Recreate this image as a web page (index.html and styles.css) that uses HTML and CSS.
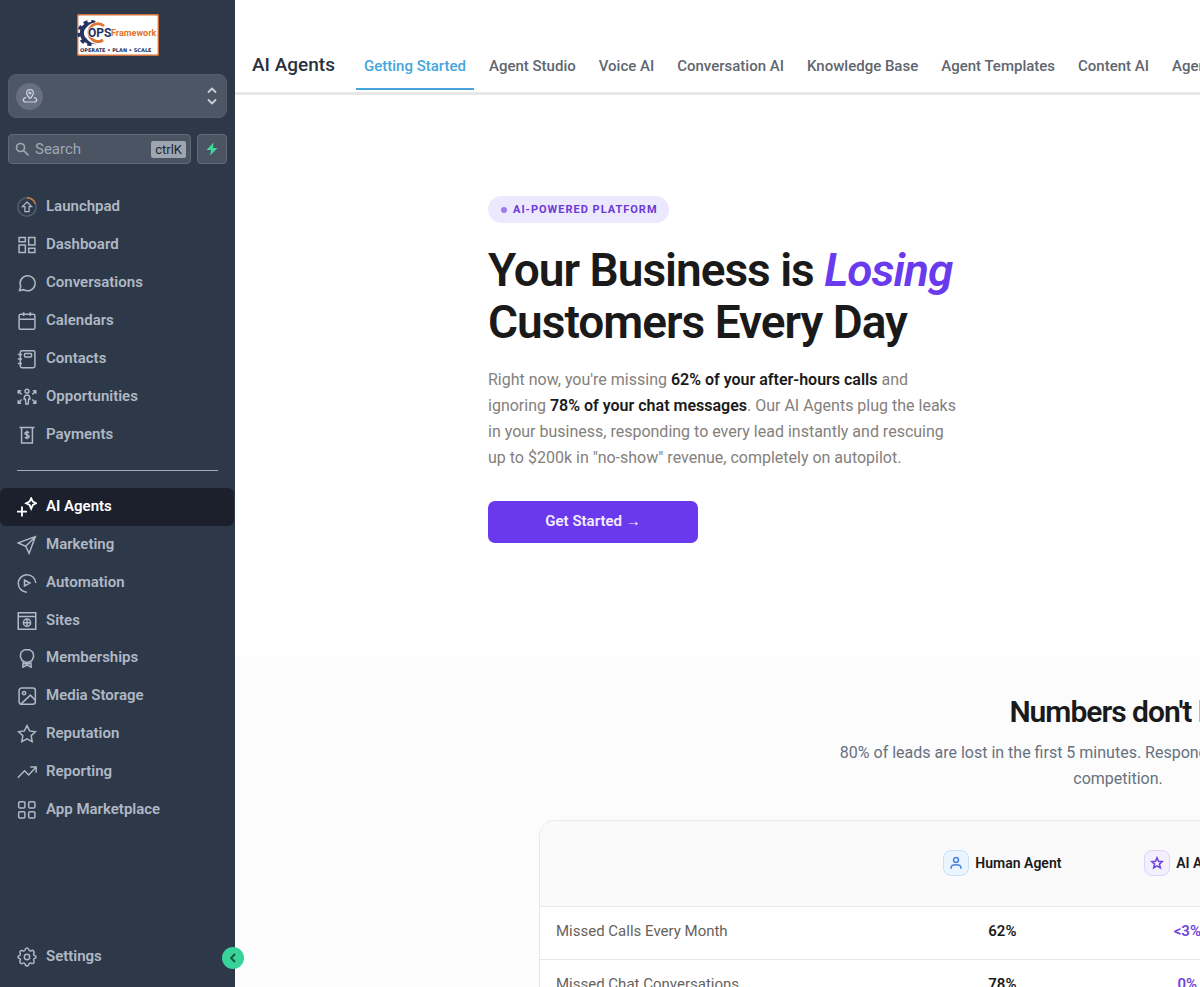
FILE: index.html
```html
<!DOCTYPE html>
<html lang="en">
<head>
<meta charset="utf-8">
<title>AI Agents</title>
<link rel="stylesheet" href="styles.css">
</head>
<body>
<div class="app">
  <aside class="sidebar">
    <svg class="logo" viewBox="0 0 82 42" role="img" aria-label="OPS Framework">
      <rect x="0.5" y="0.5" width="81" height="41" rx="2" fill="#fff" stroke="#d0713a"/>
      <path d="M18 11a9 9 0 1 0 0 16" fill="none" stroke="#26325f" stroke-width="4"/>
      <path d="M18 8.500a11.500 11.500 0 1 0 0 21" fill="none" stroke="#26325f" stroke-width="3" stroke-dasharray="4 3.500"/>
      <path d="M24 12.500a8.500 8.500 0 1 0 0 13" fill="#fff" stroke="#fff" stroke-width="4"/>
      <path d="M27 12a9 9 0 1 0-1 14" fill="none" stroke="#dd7430" stroke-width="2.800"/>
      <text x="11" y="23" class="logo-ops">OPS</text>
      <text x="34" y="22" class="logo-frame">Framework</text>
      <text x="3" y="38" class="logo-tag">OPERATE • PLAN • SCALE</text>
    </svg>
    <button class="account" aria-label="Switch account">
      <span class="account-pin"><svg class="i16" viewBox="0 0 24 24"><path d="M12 16c-4-4-5-6-5-8.500a5 5 0 0 1 10 0C17 10 16 12 12 16zM6 14c-6 2-5 7 0 7h12c5 0 6-5 0-7"/><circle cx="12" cy="7.500" r="1.500"/></svg></span>
      <svg class="chevrons" viewBox="0 0 10 18"><path d="M1 5.500l4-4 4 4M1 12.500l4 4 4-4"/></svg>
    </button>
    <div class="search-row">
      <label class="search">
        <svg class="i14" viewBox="0 0 14 14"><circle cx="5.500" cy="5.500" r="4"/><path d="M8.500 8.500l5 5"/></svg>
        <input type="text" placeholder="Search" aria-label="Search">
        <kbd>ctrlK</kbd>
      </label>
      <button class="bolt" aria-label="Quick actions"><svg viewBox="0 0 12 14"><path d="M7.500 0.500L0.500 8H5l-0.800 5.500L11.500 6H7z"/></svg></button>
    </div>
    <nav class="nav">
      <ul class="group group-main">
        <li><a href="#"><svg viewBox="0 0 24 24"><g opacity=".3"><circle cx="12" cy="12" r="11"/></g><path d="M12 1a11 11 0 0 1 10 7" stroke="#c9803f"/><path d="M12 6l-5.500 5.500h3v6h5v-6h3z" stroke-width="1.500"/></svg>Launchpad</a></li>
        <li><a href="#"><svg viewBox="0 0 24 24"><path d="M2.500 3h7.500v5H2.500zM14 3h7.500v9H14zM2.500 12h7.500v9H2.500zM14 16h7.500v5H14z"/></svg>Dashboard</a></li>
        <li><a href="#"><svg viewBox="0 0 24 24"><path d="M3 21l1.500-5A9 9 0 1 1 8 20z"/></svg>Conversations</a></li>
        <li><a href="#"><svg viewBox="0 0 24 24"><rect x="2.500" y="4" width="19" height="18" rx="2"/><path d="M8 1.500V6M16 1.500V6M3 10h18"/></svg>Calendars</a></li>
        <li><a href="#"><svg viewBox="0 0 24 24"><rect x="4" y="2" width="17.500" height="20.500" rx="2"/><rect x="9" y="5.500" width="8.500" height="4" rx="1"/><path d="M1 6.500h5M1 12h5M1 17.500h5"/></svg>Contacts</a></li>
        <li><a href="#"><svg viewBox="0 0 24 24"><circle cx="12" cy="5" r="2.300"/><path d="M12 9.500c-2 0-3.500 2-3.500 5h1.500l.7 6h2.600l.7-6h1.500c0-3-1.500-5-3.500-5zM1.500 8V4.500H5M2 5l3.500 4M22.500 8V4.500H19M22 5l-3.500 4M1.500 16v3.500H5M2 19l3.500-4M22.500 16v3.500H19M22 19l-3.500-4"/></svg>Opportunities</a></li>
        <li><a href="#"><svg viewBox="0 0 24 24"><path d="M3 3h18M5.500 3v18.500h13V3M14.500 9.500c-1-1.500-5-1.500-5 .8 0 2.400 5 1.200 5 3.500s-4 2.400-5 .7M12 7v10"/></svg>Payments</a></li>
      </ul>
      <hr class="divider">
      <ul class="group group-tools">
        <li><a href="#" class="active" aria-current="page"><svg viewBox="0 0 24 24"><path d="M17 1.500l2 4 4 2-4 2-2 4.500-2-4.500-4-2 4-2zM6 11.500v12M0 17.500h12" stroke-width="2.200"/></svg>AI Agents</a></li>
        <li><a href="#"><svg viewBox="0 0 24 24"><path d="M22 2L1.500 9.500l9 4L14.500 22zM22 2L10.500 13.500"/></svg>Marketing</a></li>
        <li><a href="#"><svg viewBox="0 0 24 24"><path d="M12 23A10.500 10.500 0 1 1 22.500 12M9 8.500v7l6.500-3.500z"/></svg>Automation</a></li>
        <li><a href="#"><svg viewBox="0 0 24 24"><path d="M1.500 2h21v20h-21zM1.500 6.500h21"/><circle cx="12" cy="14" r="4.300"/><path d="M12 10v8M8 14h8"/></svg>Sites</a></li>
        <li><a href="#"><svg viewBox="0 0 24 24"><path d="M9 2h6l4 3 1 5-2 5-4 2h-4l-4-2-2-5 1-5zM7.500 16.500L7 23l5-2.500 5 2.500-.5-6.500M8 19h8"/></svg>Memberships</a></li>
        <li><a href="#"><svg viewBox="0 0 24 24"><rect x="2.500" y="2.500" width="19.500" height="19.500" rx="3"/><circle cx="8.500" cy="8.500" r="2"/><path d="M5 21.500L16 11l6 6"/></svg>Media Storage</a></li>
        <li><a href="#"><svg viewBox="0 0 24 24"><path d="M12 2l3.100 6.300 6.900 1-5 4.900 1.200 6.900L12 17.800l-6.200 3.300L7 14.200 2 9.300l6.900-1z"/></svg>Reputation</a></li>
        <li><a href="#"><svg viewBox="0 0 24 24"><path d="M1 19l8-8.500 5 5L23 6M16 6h7v7"/></svg>Reporting</a></li>
        <li><a href="#"><svg viewBox="0 0 24 24"><rect x="2" y="2" width="7.500" height="7.500" rx="1.500"/><rect x="14" y="2" width="7.500" height="7.500" rx="1.500"/><rect x="2" y="14" width="7.500" height="7.500" rx="1.500"/><rect x="14" y="14" width="7.500" height="7.500" rx="1.500"/></svg>App Marketplace</a></li>
      </ul>
    </nav>
    <a href="#" class="settings"><svg viewBox="0 0 24 24"><circle cx="12" cy="12" r="3.200"/><path d="M12 1.200c1.900 0 2 .8 2.400 2.600.2.800 1.500 1.300 2.200.9 1.700-1 2.300-1.100 3.400 0s1 1.700 0 3.400c-.4.700.1 1.900.9 2.100 1.900.4 1.900.9 1.900 1.800s0 1.400-1.900 1.800c-.8.200-1.300 1.400-.9 2.100 1 1.700 1.100 2.300 0 3.400s-1.700 1-3.400 0c-.7-.4-2 .1-2.200.9-.4 1.800-.5 2.600-2.400 2.600s-2-.8-2.400-2.600c-.2-.8-1.500-1.300-2.200-.9-1.700 1-2.300 1.100-3.400 0s-1-1.700 0-3.400c.4-.7-.1-1.900-.9-2.100-1.900-.4-1.900-.9-1.900-1.800s0-1.400 1.900-1.800c.8-.2 1.300-1.400.9-2.100-1-1.700-1.100-2.300 0-3.400s1.700-1 3.400 0c.7.400 2-.1 2.200-.9.400-1.800.5-2.600 2.400-2.600z"/></svg>Settings</a>
    <button class="collapse" aria-label="Collapse sidebar"><svg viewBox="0 0 6 10"><path d="M5 1L1 5l4 4"/></svg></button>
  </aside>
  <main class="main">
    <div class="canvas">
      <header class="topbar">
        <h2 class="page-title">AI Agents</h2>
        <nav class="tabs">
          <a href="#" class="tab current">Getting Started</a>
          <a href="#" class="tab">Agent Studio</a>
          <a href="#" class="tab">Voice AI</a>
          <a href="#" class="tab">Conversation AI</a>
          <a href="#" class="tab">Knowledge Base</a>
          <a href="#" class="tab">Agent Templates</a>
          <a href="#" class="tab">Content AI</a>
          <a href="#" class="tab">Agent Logs</a>
        </nav>
      </header>
      <section class="hero">
        <div class="hero-copy">
          <span class="badge">AI-POWERED PLATFORM</span>
          <h1>Your Business is <em>Losing</em> Customers Every Day</h1>
          <p>Right now, you're missing <strong>62% of your after-hours calls</strong> and ignoring <strong>78% of your chat messages</strong>. Our AI Agents plug the leaks in your business, responding to every lead instantly and rescuing up to $200k in "no-show" revenue, completely on autopilot.</p>
          <button class="cta">Get Started →</button>
        </div>
      </section>
      <section class="numbers">
        <h2>Numbers don't lie</h2>
        <p>80% of leads are lost in the first 5 minutes. Respond instantly or lose out to the competition.</p>
        <div class="table-card">
          <table>
            <colgroup><col class="c-metric"><col class="c-agent"><col class="c-agent"><col></colgroup>
            <thead>
              <tr>
                <td></td>
                <th scope="col"><span class="agent"><span class="chip chip-human"><svg viewBox="0 0 16 16"><circle cx="8" cy="4.500" r="2.800"/><path d="M2.500 14.500v-1.500c0-4 11-4 11 0v1.500"/></svg></span>Human Agent</span></th>
                <th scope="col"><span class="agent"><span class="chip chip-ai"><svg viewBox="0 0 16 16"><path d="M8 2l1.700 4 4.300.4-3.200 2.800 1 4.300L8 11.200l-3.800 2.300 1-4.300L2 6.400 6.300 6z"/></svg></span>AI Agent</span></th>
                <td></td>
              </tr>
            </thead>
            <tbody>
              <tr><th scope="row">Missed Calls Every Month</th><td>62%</td><td class="ai">&lt;3%</td><td></td></tr>
              <tr><th scope="row">Missed Chat Conversations</th><td>78%</td><td class="ai">0%</td><td></td></tr>
            </tbody>
          </table>
        </div>
      </section>
    </div>
  </main>
</div>
</body>
</html>
```
FILE: styles.css
```css
* { box-sizing: border-box; }
body { margin: 0; font-family: Roboto, "Liberation Sans", sans-serif; color: #1a1a1a; background: #fff; }
h1, h2, p, ul { margin: 0; padding: 0; }
ul { list-style: none; }
a { color: inherit; text-decoration: none; }
button { font: inherit; border: 0; padding: 0; cursor: pointer; }
svg { fill: none; stroke: currentColor; stroke-width: 1.800; flex: none; }

.app { display: flex; height: 100vh; overflow: hidden; }

/* Sidebar */
.sidebar { position: relative; z-index: 1; flex: none; width: 235px; display: flex; flex-direction: column; background: #2d3848; color: #b0b8c5; }
.logo { width: 82px; height: 42px; margin: 14px auto 18px; stroke: none; }
.logo text { stroke: none; font-weight: 700; }
.logo .logo-ops { font-size: 12px; fill: #26325f; stroke: #fff; stroke-width: 1; paint-order: stroke; }
.logo-frame { font-size: 9px; fill: #dd7430; }
.logo-tag { font-family: "DejaVu Sans", sans-serif; font-size: 5px; fill: #26325f; }
.account { display: flex; align-items: center; justify-content: space-between; height: 44px; margin: 0 8px 16px 8px; padding: 0 9px 0 7px; border: 1px solid #535c6a; border-radius: 8px; background: #4d5664; color: #ccd2da; }
.account-pin { display: grid; place-items: center; width: 27px; height: 27px; border-radius: 50%; background: #677080; }
.i14 { width: 14px; height: 14px; }
.i16 { width: 16px; height: 16px; }
.chevrons { width: 10px; height: 18px; stroke-width: 1.800; }
.search-row { display: flex; gap: 6px; margin: 0 8px 24px 8px; }
.search { flex: 1; display: flex; align-items: center; gap: 6px; height: 30px; min-width: 0; padding: 0 4px 0 6px; border: 1px solid #5f6978; border-radius: 4px; background: #4a5463; color: #a0a8b4; }
.search input { flex: 1; min-width: 0; padding: 0; border: 0; outline: 0; background: none; color: inherit; font: 15px Roboto, sans-serif; }
.search input::placeholder { color: #a0a8b4; opacity: 1; }
.search svg { stroke-width: 1.600; }
.search kbd { padding: 0 4px; border-radius: 2px; background: #9da5b1; color: #1d2531; font: 13px/17px Roboto, sans-serif; }
.bolt { display: grid; place-items: center; width: 30px; height: 30px; border: 1px solid #5f6978; border-radius: 4px; background: #4a5463; }
.bolt svg { width: 12px; height: 14px; fill: #3fd79b; stroke: none; }
.group { display: grid; grid-auto-rows: 1fr; }
.group-main { min-height: 265px; }
.group-tools { min-height: 340px; }
.nav a, .settings { display: flex; align-items: center; gap: 9px; height: 100%; padding-left: 17px; padding-bottom: 1px; font-size: 15px; font-weight: 600; }
.nav a svg, .settings svg { width: 20px; height: 20px; margin-top: 2px; }
.nav .active { margin-right: 1px; border-radius: 6px; background: #1b202c; color: #fff; }
.divider { height: 1px; margin: 17px 17px; border: 0; background: #a3adba; }
.settings { height: 38px; margin-top: auto; margin-bottom: 12px; }
.collapse { position: absolute; right: -9px; bottom: 18px; display: grid; place-items: center; width: 22px; height: 22px; border-radius: 50%; background: #38d399; color: #14533b; }
.collapse svg { width: 6px; height: 10px; }

.main { flex: 1; min-width: 0; overflow: hidden; }
.canvas { min-width: 1766px; }
.topbar { display: flex; align-items: flex-end; height: 95px; padding-left: 17px; border-bottom: 3px solid #e6e8e8; }
.page-title { width: 104px; padding-bottom: 16px; font-size: 19px; line-height: 22px; font-weight: 500; color: #2a303c; }
.tabs { display: flex; gap: 7px; padding-bottom: 2px; }
.tab { padding: 0 8px 13px; font-size: 15px; line-height: 18px; font-weight: 500; color: #5f6670; border-bottom: 2px solid transparent; }
.tab.current { color: #45a5dc; border-color: #45a5dc; }

.hero { max-width: 1260px; margin: 0 auto; padding: 101px 0 113px; }
.hero-copy { width: 474px; display: flex; flex-direction: column; align-items: flex-start; }
.badge { display: flex; align-items: center; gap: 6px; height: 27px; padding: 0 11px 0 13px; border-radius: 14px; background: #ece9fe; color: #6b3ad6; font-size: 11px; font-weight: 700; letter-spacing: 1px; }
.badge::before { content: ""; width: 6px; height: 6px; border-radius: 50%; background: #9a7bea; }
h1 { margin-top: 21px; font-size: 46px; line-height: 52px; font-weight: 600; letter-spacing: -1px; }
h1 em { color: #6a3aee; }
.hero p { margin-top: 19px; font-size: 16px; line-height: 26px; color: #84807c; }
.hero strong { font-weight: 600; color: #1a1a1a; }
.cta { width: 210px; height: 42px; margin-top: 30px; padding-bottom: 2px; border-radius: 7px; background: #6a39ee; color: #f3eeff; font-size: 15px; font-weight: 600; }

.numbers { padding: 38px 0 0; min-height: 332px; background: #fcfcfd; text-align: center; }
.numbers h2 { font-size: 30px; line-height: 36px; font-weight: 600; letter-spacing: -1px; }
.numbers p { max-width: 590px; margin: 10px auto 28px; font-size: 16px; line-height: 26px; color: #66717f; }
.table-card { width: 1158px; margin: 0 auto; overflow: hidden; border: 1px solid #e8e8ea; border-radius: 16px 16px 0 0; background: #fff; }
table { width: 100%; table-layout: fixed; border-collapse: collapse; font-size: 15px; }
.c-metric { width: 32%; }
.c-agent { width: 16%; }
td, th { padding: 0 16px; border-bottom: 1px solid #e8e8ea; font-weight: 600; }
thead tr { height: 85px; background: #fafafb; }
thead th { padding: 0; font-size: 14px; }
tbody tr { height: 53px; }
tbody td, tbody th { padding-bottom: 3px; }
tbody th { text-align: left; font-weight: 400; color: #66625e; }
.ai { color: #6f45e0; }
.agent { display: inline-flex; align-items: center; gap: 6px; }
.chip { display: grid; place-items: center; width: 26px; height: 26px; border: 1px solid; border-radius: 8px; }
.chip svg { width: 14px; height: 14px; }
.chip-human { background: #eaf5ff; border-color: #c3e2fb; }
.chip-human svg { stroke: #4a82e0; }
.chip-ai { background: #f3effe; border-color: #ddd3fb; }
.chip-ai svg { stroke: #6f45e0; }
```
